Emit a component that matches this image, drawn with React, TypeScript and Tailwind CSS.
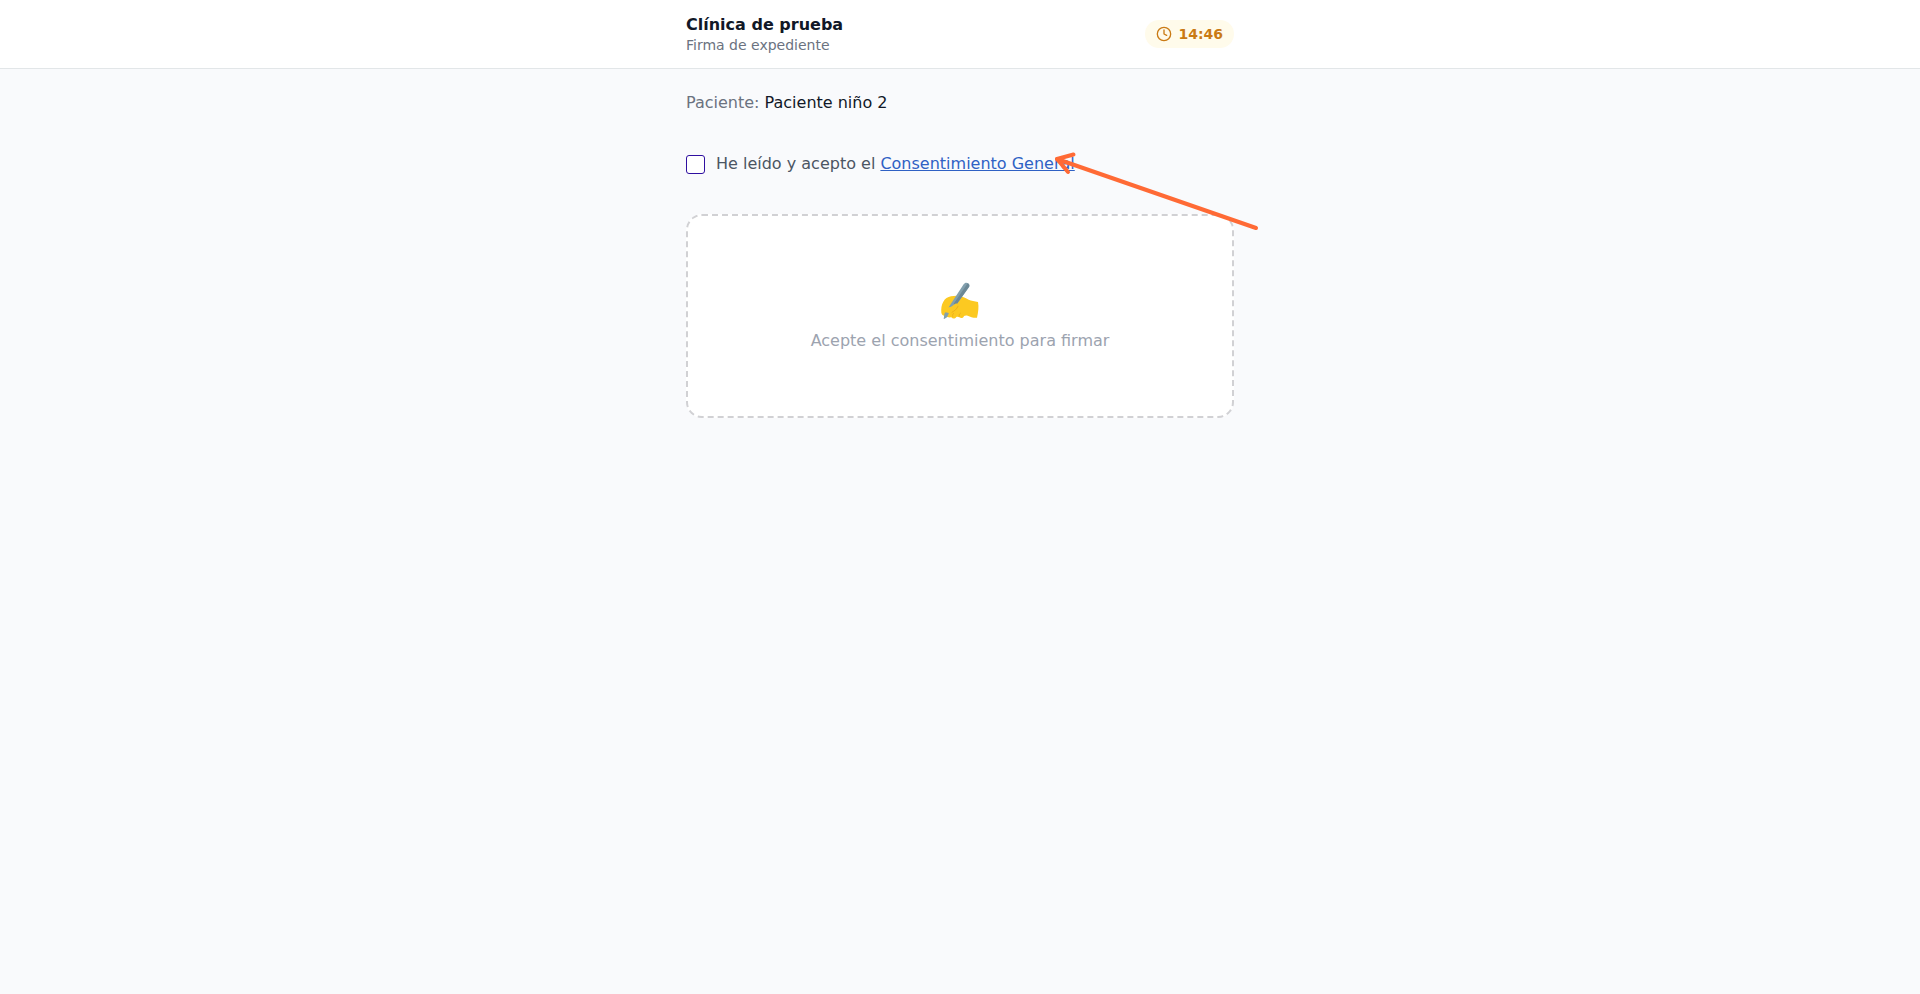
import { useState } from 'react';

const SESSION_SECONDS = 886;

function formatTime(seconds: number) {
  const m = Math.floor(seconds / 60);
  const s = seconds % 60;
  return `${m}:${s.toString().padStart(2, '0')}`;
}

function ClockIcon() {
  return (
    <svg
      className="h-4 w-4"
      viewBox="0 0 24 24"
      fill="none"
      stroke="currentColor"
      strokeWidth={2}
      strokeLinecap="round"
      strokeLinejoin="round"
      aria-hidden="true"
    >
      <circle cx="12" cy="12" r="10" />
      <path d="M12 6v6l4 2" />
    </svg>
  );
}

function WritingHand() {
  return (
    <svg className="mx-auto h-10 w-10" viewBox="0 -3 120 120" aria-hidden="true">
      {/* hand */}
      <path
        fill="#fcc921"
        d="M4 98c-1-12 0-24 6-33 5-9 13-14 23-16 9-2 18-3 26-1 10 2 18 7 27 11 8 3 18 4 28 7 3 14 1 31-3 47-11 1-19-2-28-6-4-1-8-1-11 1-2 7-9 8-14 4-3-2-6-3-9-1-4 6-11 6-15 1-9 1-14-1-20-4-5-2-9-4-10-10z"
      />
      {/* pen */}
      <path fill="#82a0ae" d="M71 13c3-5 9-6 13-3 5 3 6 8 3 12L48 76 28 97l-7 15-10 6 2-16 13-20z" />
      <path fill="#6c8896" d="M83 10c5 3 6 8 3 12L48 76l-7-5z" />
      {/* fingers holding the pen */}
      <path
        fill="#fcc921"
        d="M6 90c4-11 12-10 20-8 7 0 13-6 19-10 7-4 12 1 9 8-3 7-10 12-16 16-5 4-9 5-14 2-6-1-13-2-18-8z"
      />
      <path
        fill="none"
        stroke="#eeb01a"
        strokeWidth={3}
        strokeLinecap="round"
        d="M54 79c-3 8-10 13-18 18M38 109c-1-4 0-7 3-9M58 108c-1-3 0-6 3-8"
      />
    </svg>
  );
}

function PointerArrow() {
  return (
    <svg
      className="pointer-events-none absolute top-0 -right-46 h-21 w-52"
      viewBox="0 0 208 84"
      fill="none"
      stroke="#ff6a35"
      strokeWidth={4}
      strokeLinecap="round"
      strokeLinejoin="round"
      aria-hidden="true"
    >
      <path d="M205 78 6 9" />
      <path d="M22.5 4.5 6 9l11 13" />
    </svg>
  );
}

export default function App() {
  const [accepted, setAccepted] = useState(false);

  return (
    <div className="min-h-screen bg-[#f9fafc] font-['DejaVu_Sans',sans-serif] text-base">
      <header className="border-b border-[#e2e6e8] bg-white">
        <div className="mx-auto flex max-w-[580px] items-center justify-between px-4 py-3.5">
          <div>
            <h1 className="leading-[22px] font-bold text-[#111827]">Clínica de prueba</h1>
            <p className="text-sm leading-[18px] text-[#6b7280]">Firma de expediente</p>
          </div>
          <div className="flex items-center gap-1.5 rounded-full bg-[#fffbeb] px-[11px] py-1 text-sm font-bold text-[#ca7a14]">
            <ClockIcon />
            <span>{formatTime(SESSION_SECONDS)}</span>
          </div>
        </div>
      </header>

      <main className="mx-auto max-w-[580px] px-4 pt-5">
        <p className="leading-7 text-[#111827]">
          <span className="text-[#6b7280]">Paciente:</span> Paciente niño 2
        </p>

        <div className="mt-[33px] flex items-center gap-[11px] leading-7 text-[#4b5563]">
          <input
            id="consent"
            type="checkbox"
            checked={accepted}
            onChange={(e) => setAccepted(e.target.checked)}
            className="h-[19px] w-[19px] shrink-0 appearance-none rounded-[3px] border border-[#2f0fa0] bg-white checked:bg-[#2f0fa0]"
          />
          <div className="relative">
            <label htmlFor="consent">He leído y acepto el </label>
            <a href="#consentimiento" className="text-[#2f61c4] underline">
              Consentimiento General
            </a>
            <PointerArrow />
          </div>
        </div>

        <section className="mt-9 rounded-2xl border-2 border-dashed border-[#d1d1d4] bg-white py-[63px] text-center">
          <WritingHand />
          <p className="mt-2.5 text-[#9ca3af]">Acepte el consentimiento para firmar</p>
        </section>
      </main>
    </div>
  );
}
